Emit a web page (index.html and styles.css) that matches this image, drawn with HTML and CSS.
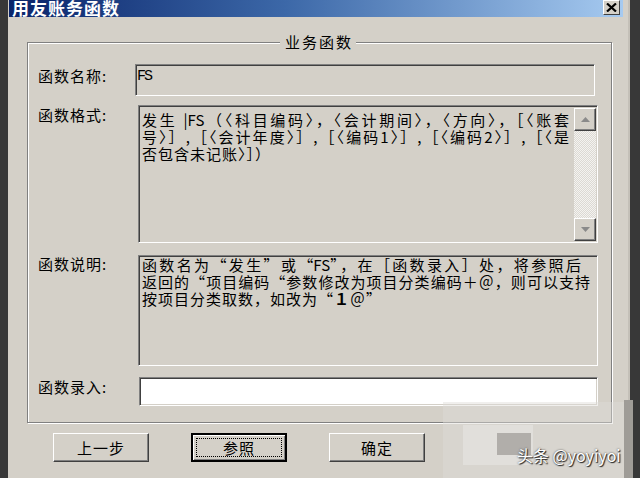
FILE: index.html
```html
<!DOCTYPE html>
<html lang="zh-CN">
<head>
<meta charset="utf-8">
<title>用友账务函数</title>
<link rel="stylesheet" href="styles.css">
</head>
<body>
<div class="screen">
  <div class="window">
    <div class="titlebar">
      <span class="title">用友账务函数</span>
      <span class="close"><svg width="11" height="9" viewBox="0 0 11 9"><path d="M1 0.5 L10 8.5 M10 0.5 L1 8.5" stroke="#000" stroke-width="2.2" fill="none"/></svg></span>
    </div>
    <div class="group">
      <div class="group-title">业务函数</div>
      <div class="row row-name">
        <div class="label lab-name">函数名称:</div>
        <div class="field name-field">FS</div>
      </div>
      <div class="row row-format">
        <div class="label lab-format">函数格式:</div>
        <div class="field area format-area">
          <div class="area-text">
            <div class="line full w-fmt">发生 |FS（〈科目编码〉，〈会计期间〉，〈方向〉，［〈账套</div>
            <div class="line full w-fmt">号〉］,［〈会计年度〉］,［〈编码1〉］,［〈编码2〉］,［〈是</div>
            <div class="line">否包含未记账〉］）</div>
          </div>
          <div class="scrollbar">
            <div class="sb-btn"><svg width="9" height="5" viewBox="0 0 9 5"><path d="M4.5 0 L9 5 L0 5 Z" fill="#8a8a8a"/></svg></div>
            <div class="sb-track"></div>
            <div class="sb-btn"><svg width="9" height="5" viewBox="0 0 9 5"><path d="M0 0 L9 0 L4.5 5 Z" fill="#8a8a8a"/></svg></div>
          </div>
        </div>
      </div>
      <div class="row row-desc">
        <div class="label lab-desc">函数说明:</div>
        <div class="field area desc-area">
          <div class="area-text desc-text">
            <div class="line full w-d1">函数名为“发生”或“FS”，在［函数录入］处，将参照后</div>
            <div class="line full w-d2">返回的“项目编码“参数修改为项目分类编码＋＠，则可以支持</div>
            <div class="line">按项目分类取数，如改为“<b>１</b>＠”</div>
          </div>
        </div>
      </div>
      <div class="row row-input">
        <div class="label lab-input">函数录入:</div>
        <div class="field input-field"></div>
      </div>
    </div>
    <div class="buttons">
      <div class="btn">上一步</div>
      <div class="btn btn-default"><span class="focus">参照</span></div>
      <div class="btn">确定</div>
    </div>
  </div>
  <div class="blur b1"></div>
  <div class="blur b2"></div>
  <div class="blur b3"></div>
  <div class="blur b4"></div>
  <div class="watermark">头条 @yoyiyoi</div>
</div>
</body>
</html>
```

FILE: styles.css
```css
* { box-sizing: border-box; }
html, body { margin: 0; padding: 0; }
body {
  width: 640px;
  height: 478px;
  overflow: hidden;
  background: #383838;
  font-family: "Noto Sans CJK SC", "Liberation Sans", sans-serif;
  color: #000;
}
.screen { position: relative; width: 640px; height: 478px; }

.window {
  margin-left: 8px;
  width: 622px;
  height: 478px;
  background: #d4d0c8;
  padding: 0 5px 0 1px;
  border-right: 2px solid #c4c0b8;
  display: flex;
  flex-direction: column;
}
.titlebar {
  height: 17px;
  flex: none;
  background: linear-gradient(90deg, #0a246a 0%, #3c68a8 45%, #a6caf0 100%);
  display: flex;
  justify-content: space-between;
  align-items: flex-start;
  padding: 0 3px 0 3px;
  overflow: hidden;
}
.title {
  color: #fff;
  font-weight: bold;
  font-size: 17px;
  line-height: 16px;
  letter-spacing: 1px;
}
.close {
  width: 17px;
  height: 15px;
  background: #d4d0c8;
  border: 1px solid;
  border-color: #fff #404040 #404040 #fff;
  display: flex;
  align-items: center;
  justify-content: center;
}

.group {
  position: relative;
  margin: 25px 0 0 18px;
  width: 585px;
  height: 381px;
  border: 1px solid #808080;
  box-shadow: 1px 1px 0 #fff, inset 1px 1px 0 #fff;
  padding: 21px 0 0 10px;
  display: flex;
  flex-direction: column;
}
.group-title {
  position: absolute;
  top: -11px;
  left: 252px;
  background: #d4d0c8;
  padding: 0 3px 0 5px;
  font-size: 15px;
  line-height: 20px;
  letter-spacing: 2px;
}

.row { display: flex; }
.label {
  width: 97px;
  flex: none;
  font-size: 15px;
  letter-spacing: 1px;
  line-height: 20px;
}
.lab-name { padding-top: 2px; }
.lab-format { padding-top: 0; }
.lab-desc { line-height: 17px; }
.lab-input { padding-top: 0; }

.field {
  border: 1px solid;
  border-color: #808080 #fff #fff #808080;
  box-shadow: inset 1px 1px 0 #404040, inset -1px -1px 0 #d4d0c8;
  background: #d4d0c8;
}
.name-field {
  width: 460px;
  height: 32px;
  font-family: "Liberation Mono", monospace;
  font-size: 15px;
  line-height: 18px;
  padding: 3px 0 0 1px;
  letter-spacing: -2px;
}
.row-format { margin-top: 9px; }
.row-desc { margin-top: 12px; }
.row-input { margin-top: 11px; }

.area { width: 460px; display: flex; }
.format-area { height: 138px; margin-left: 3px; }
.desc-area { height: 111px; margin-left: 3px; }
.area-text {
  flex: 1;
  padding: 5px 0 0 3px;
  font-size: 15px;
  line-height: 17px;
  letter-spacing: 1px;
}
.desc-text { padding-top: 0; }
.line { white-space: nowrap; }
.line b { font-weight: bold; }
.full { text-align: justify; text-align-last: justify; white-space: normal; letter-spacing: 0; }
.w-fmt { width: 427px; }
.w-d1 { width: 439px; }
.w-d2 { width: 448px; }

.scrollbar {
  width: 22px;
  flex: none;
  margin: 2px 1px 1px 0;
  display: flex;
  flex-direction: column;
}
.sb-btn {
  height: 23px;
  flex: none;
  background: #d4d0c8;
  border: 1px solid;
  border-color: #fff #404040 #404040 #fff;
  box-shadow: inset -1px -1px 0 #808080;
  display: flex;
  align-items: center;
  justify-content: center;
}
.sb-track {
  flex: 1;
  background: repeating-conic-gradient(#f4f3f0 0 25%, #dcd9d3 0 50%) 0 0 / 2px 2px;
}

.input-field {
  width: 459px;
  height: 29px;
  margin-left: 4px;
  background: #fff;
}

.buttons {
  display: flex;
  gap: 42px;
  margin-top: 10px;
  padding-left: 44px;
}
.btn {
  width: 96px;
  height: 29px;
  background: #d4d0c8;
  border: 1px solid;
  border-color: #fff #404040 #404040 #fff;
  box-shadow: inset -1px -1px 0 #808080;
  display: flex;
  align-items: center;
  justify-content: center;
  font-size: 15px;
  letter-spacing: 1px;
}
.btn-default {
  border: 2px solid #000;
  box-shadow: inset 1px 1px 0 #fff, inset -1px -1px 0 #808080;
  padding: 3px;
}
.focus {
  flex: 1;
  align-self: stretch;
  border: 1px dotted #000;
  display: flex;
  align-items: center;
  justify-content: center;
}

.blur { position: absolute; }
.b1 { left: 443px; top: 402px; width: 185px; height: 76px; background: rgba(222, 220, 215, 0.45); }
.b2 { left: 463px; top: 425px; width: 70px; height: 40px; background: rgba(232, 230, 226, 0.6); }
.b3 { left: 497px; top: 433px; width: 34px; height: 22px; background: rgba(160, 158, 154, 0.75); }
.b4 { left: 624px; top: 400px; width: 9px; height: 78px; background: #9f9c97; }

.watermark {
  position: absolute;
  left: 517px;
  top: 445px;
  color: #fff;
  font-size: 16px;
  line-height: 20px;
  text-shadow: 1px 1px 1px #222, 0 0 2px #444;
}
```
